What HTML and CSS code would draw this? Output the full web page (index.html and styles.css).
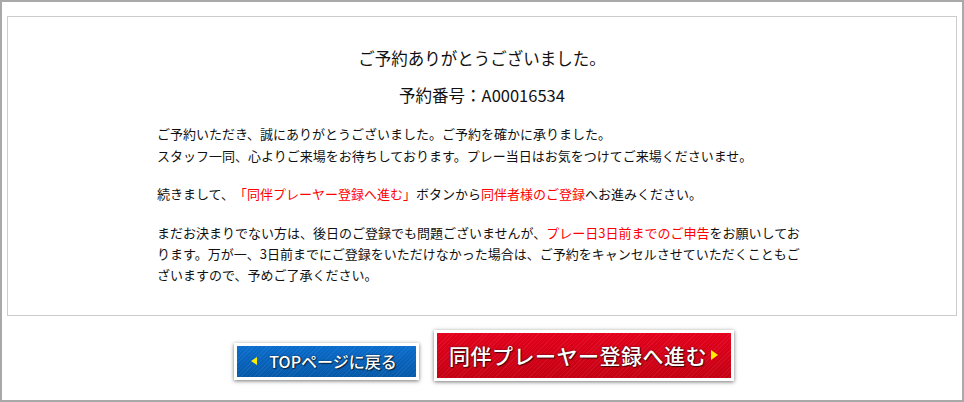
FILE: index.html
```html
<!DOCTYPE html>
<html lang="ja">
<head>
<meta charset="utf-8">
<title>ご予約ありがとうございました。</title>
<link rel="stylesheet" href="styles.css">
</head>
<body>
<div class="frame">
  <div class="box">
    <h1 class="title">ご予約ありがとうございました。</h1>
    <p class="number">予約番号：A00016534</p>
    <div class="message">
      <p>ご予約いただき、誠にありがとうございました。ご予約を確かに承りました。<br>スタッフ一同、心よりご来場をお待ちしております。プレー当日はお気をつけてご来場くださいませ。</p>
      <p class="gap1">続きまして、<span class="red">「同伴プレーヤー登録へ進む」</span>ボタンから<span class="red">同伴者様のご登録</span>へお進みください。</p>
      <p class="gap2">まだお決まりでない方は、後日のご登録でも問題ございませんが、<span class="red">プレー日3日前までのご申告</span>をお願いしております。万が一、3日前までにご登録をいただけなかった場合は、ご予約をキャンセルさせていただくこともございますので、予めご了承ください。</p>
    </div>
  </div>
  <div class="buttons">
    <a class="btn btn-blue" href="#"><span class="arrow-left"></span>TOPページに戻る</a>
    <a class="btn btn-red" href="#">同伴プレーヤー登録へ進む<span class="arrow-right"></span></a>
  </div>
</div>
</body>
</html>
```
FILE: styles.css
```css
html, body {
  margin: 0;
  padding: 0;
  background: #fff;
}
body {
  font-family: "Noto Sans CJK JP", "Noto Sans", sans-serif;
  color: #111;
  text-spacing-trim: space-all;
}
.frame {
  box-sizing: border-box;
  width: 964px;
  height: 402px;
  border: 2px solid #a9a9a9;
  padding: 14px 5px 0;
}
.box {
  border: 1px solid #cccccc;
  padding: 29px 0 30px;
}
.title {
  margin: 0;
  font-size: 16.5px;
  font-weight: normal;
  line-height: 24px;
  text-align: center;
}
.number {
  margin: 13px 0 0;
  font-size: 16.5px;
  line-height: 24px;
  text-align: center;
}
.message {
  width: 650px;
  margin: 16px auto 0;
  font-size: 13px;
  line-height: 21.5px;
}
.message p {
  margin: 0;
}
.message .gap1 {
  margin-top: 17px;
}
.message .gap2 {
  margin-top: 17px;
  line-height: 21px;
}
.red {
  color: #ff0000;
}
.buttons {
  display: flex;
  justify-content: center;
  align-items: flex-end;
  gap: 15px;
  margin-top: 14px;
}
.btn {
  display: flex;
  align-items: center;
  justify-content: center;
  color: #fff;
  text-decoration: none;
  border: 3px solid #fff;
  box-shadow: 0 1px 4px rgba(0, 0, 0, 0.55);
  text-shadow: 0 0 2px rgba(0, 0, 0, 0.7), 1px 1px 1px rgba(0, 0, 0, 0.6);
}
.btn-blue {
  width: 179px;
  height: 31px;
  font-size: 16px;
  font-weight: 500;
  margin-left: 3px;
  margin-bottom: 1px;
  background:
    repeating-linear-gradient(135deg, rgba(255,255,255,0.06) 0 1px, rgba(255,255,255,0) 1px 3px),
    linear-gradient(#0a6ccc, #0558a8);
}
.btn-red {
  width: 294px;
  height: 45px;
  font-size: 21px;
  font-weight: 500;
  letter-spacing: 0.5px;
  background:
    repeating-linear-gradient(135deg, rgba(255,255,255,0.06) 0 1px, rgba(255,255,255,0) 1px 3px),
    linear-gradient(#e4001c, #c40012);
}
.arrow-left {
  width: 0;
  height: 0;
  border-top: 4px solid transparent;
  border-bottom: 4px solid transparent;
  border-right: 6px solid #ffee00;
  margin-right: 12px;
  margin-left: -4px;
}
.arrow-right {
  width: 0;
  height: 0;
  border-top: 5px solid transparent;
  border-bottom: 5px solid transparent;
  border-left: 7px solid #ffee00;
  margin-left: 4px;
}
```
